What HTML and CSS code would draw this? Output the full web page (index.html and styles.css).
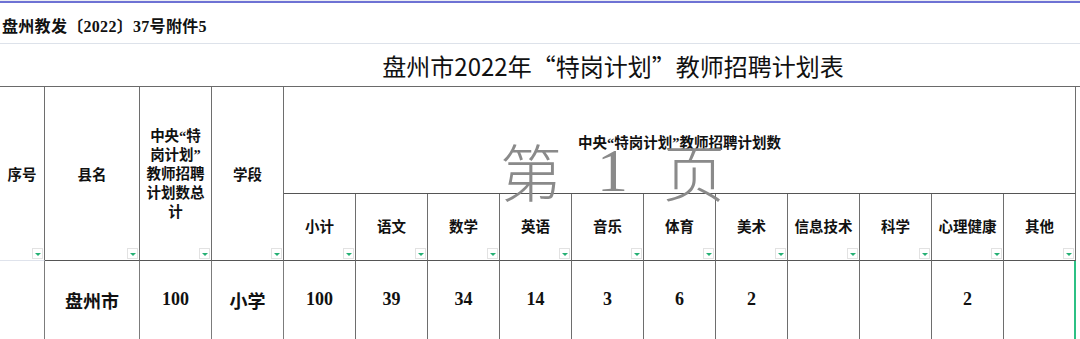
FILE: index.html
```html
<!DOCTYPE html>
<html lang="zh-CN">
<head>
<meta charset="utf-8">
<title>盘州市2022年“特岗计划”教师招聘计划表</title>
<link rel="stylesheet" href="styles.css">
</head>
<body>
<div class="sheet">
  <div class="topbar"></div>
  <div class="doc-no">盘州教发〔2022〕37号附件5</div>
  <div class="title-row"><h1 class="title">盘州市2022年<span class="q">“</span>特岗计划<span class="q">”</span>教师招聘计划表</h1></div>
  <div class="grid">
    <div class="cell head tall first">序号<span class="dd"></span></div>
    <div class="cell head tall">县名<span class="dd"></span></div>
    <div class="cell head tall multi">中央“特<br>岗计划”<br>教师招聘<br>计划数总<br>计<span class="dd"></span></div>
    <div class="cell head tall">学段<span class="dd"></span></div>
    <div class="cell head group">中央“特岗计划”教师招聘计划数</div>

    <div class="cell head sub">小计<span class="dd"></span></div>
    <div class="cell head sub">语文<span class="dd"></span></div>
    <div class="cell head sub">数学<span class="dd"></span></div>
    <div class="cell head sub">英语<span class="dd"></span></div>
    <div class="cell head sub">音乐<span class="dd"></span></div>
    <div class="cell head sub">体育<span class="dd"></span></div>
    <div class="cell head sub">美术<span class="dd"></span></div>
    <div class="cell head sub">信息技术<span class="dd"></span></div>
    <div class="cell head sub">科学<span class="dd"></span></div>
    <div class="cell head sub">心理健康<span class="dd"></span></div>
    <div class="cell head sub">其他<span class="dd"></span></div>

    <div class="cell data first soft"></div>
    <div class="cell data soft">盘州市</div>
    <div class="cell data soft">100</div>
    <div class="cell data soft">小学</div>
    <div class="cell data">100</div>
    <div class="cell data">39</div>
    <div class="cell data">34</div>
    <div class="cell data">14</div>
    <div class="cell data">3</div>
    <div class="cell data">6</div>
    <div class="cell data">2</div>
    <div class="cell data"></div>
    <div class="cell data"></div>
    <div class="cell data">2</div>
    <div class="cell data selected"></div>
  </div>
  <div class="watermark"><span class="wm-cjk">第</span><span class="wm-num">1</span><span class="wm-cjk">页</span></div>
</div>
</body>
</html>
```
FILE: styles.css
```css
* { box-sizing: border-box; }
html, body { margin: 0; padding: 0; background: #fff; }
body {
  width: 1080px;
  height: 339px;
  overflow: hidden;
  color: #111;
  font-family: "Liberation Serif", "Noto Sans CJK SC", serif;
}
.sheet { position: relative; width: 1080px; }

.topbar {
  height: 3px;
  border-top: 1px solid #eceef3;
  border-bottom: 2px solid #6e72d4;
}

.doc-no {
  height: 41px;
  border-bottom: 1px solid #dde2ea;
  padding: 4px 0 0 2px;
  display: flex;
  align-items: center;
  font-size: 16px;
  font-weight: bold;
  letter-spacing: 0.3px;
}

.title-row {
  height: 43px;
  border-bottom: 1px solid #6a6a6a;
  padding: 2px 0 0 146px;
  display: flex;
  align-items: center;
  justify-content: center;
}
.title {
  margin: 0;
  font-family: "Noto Sans CJK SC", "Liberation Sans", sans-serif;
  font-weight: 400;
  font-size: 24px;
  line-height: 1;
  color: #111;
}
.q { font-feature-settings: "fwid"; }

.grid {
  display: grid;
  grid-template-columns: 45px 95px 72px 72px repeat(11, 72px);
  grid-template-rows: 107px 67px 80px;
}

.cell {
  position: relative;
  border-right: 1px solid #6e6e6e;
  border-bottom: 1px solid #555;
  display: flex;
  align-items: center;
  justify-content: center;
  text-align: center;
}

.head {
  font-size: 14.5px;
  font-weight: bold;
}
.tall { grid-row: span 2; }
.first.tall { border-bottom-color: #dfe3ec; }
.group { grid-column: span 11; padding-top: 2px; }
.sub { padding-bottom: 4px; }
.multi { line-height: 19px; padding-top: 2px; }

.data {
  font-size: 18px;
  font-weight: bold;
  padding-bottom: 2px;
}
.data.first { border-bottom-color: transparent; }
.soft { border-right-color: #7c7c7c; }
.selected { border-right: 2px solid #2cc084; }

.dd {
  position: absolute;
  right: 1px;
  bottom: 1px;
  width: 11px;
  height: 11px;
  background: #fff;
  border: 1px solid #e2e2e2;
  display: flex;
  align-items: center;
  justify-content: center;
}
.dd::after {
  content: "";
  width: 0;
  height: 0;
  border-left: 3px solid transparent;
  border-right: 3px solid transparent;
  border-top: 3px solid #25b074;
  margin-top: 1px;
}

.watermark {
  position: absolute;
  left: 500px;
  top: 139px;
  display: flex;
  gap: 35px;
  color: #8a8a8a;
  font-size: 62px;
  line-height: 62px;
  pointer-events: none;
}
.wm-cjk { font-family: "Noto Sans CJK SC", serif; font-weight: 300; }
.wm-num { font-family: "Liberation Serif", serif; font-weight: 400; }
```
